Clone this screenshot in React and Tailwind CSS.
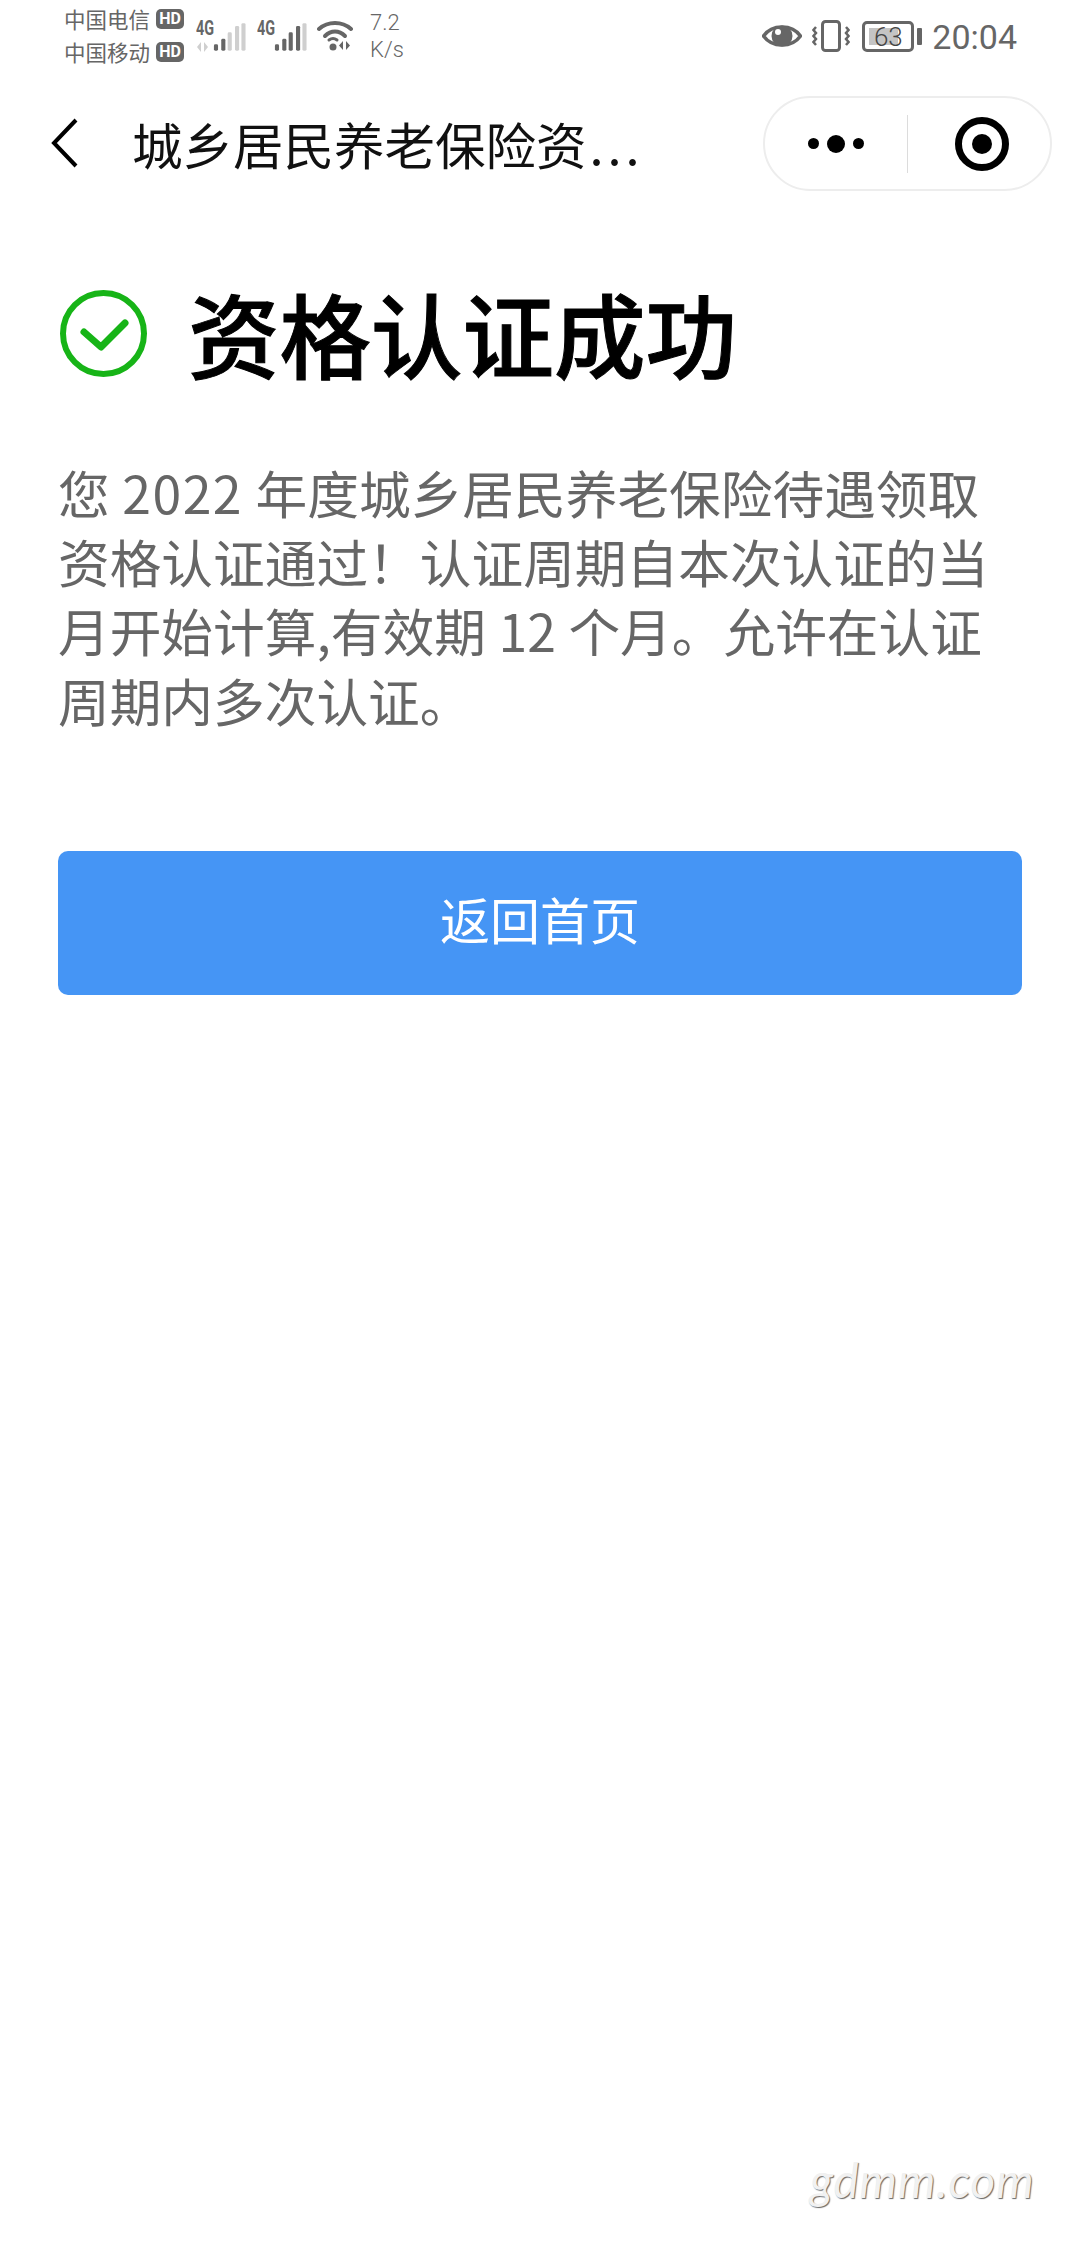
function Bars({ w, active }) {
  const xs = [3, 11, 18, 26, 33];
  const hs = [7, 13, 20, 27, 30];
  return (
    <svg width={w} height="32" viewBox="0 0 36 32" className="block">
      {xs.map((x, i) => (
        <rect key={i} x={x - 2} y={32 - hs[i]} width="4.5" height={hs[i]} rx="1.5" fill={i < active ? "#666" : "#cfcfcf"} />
      ))}
    </svg>
  );
}

function Signal({ active, arrows }) {
  return (
    <div className="relative w-[50px] h-[32px] flex items-end justify-end">
      <span className="absolute left-0 top-[1px] font-['Roboto',sans-serif] font-bold text-[20px] leading-[14px] text-[#666] [transform:scaleX(0.72)] origin-left">4G</span>
      {arrows && (
        <svg width="14" height="10" viewBox="0 0 14 10" className="absolute left-0 bottom-0">
          <path d="M5 0v10L1 5zM8 0v10l4-5z" fill="#cfcfcf" />
        </svg>
      )}
      <Bars w={33} active={active} />
    </div>
  );
}

function HD() {
  return (
    <span className="w-[28px] h-[20px] rounded-[5px] bg-[#666] text-white text-[16px] leading-[20px] font-bold text-center font-['Roboto',sans-serif]">HD</span>
  );
}

export default function App() {
  return (
    <div className="relative w-[1080px] h-[2244px] bg-white overflow-hidden font-['Noto_Sans_CJK_SC','Noto_Sans',sans-serif]">
      {/* status bar */}
      <div className="h-[72px] flex items-start pl-[64px] pr-[63px] text-[#666]">
        <div className="w-[121px] pt-[7px] flex flex-col gap-[9px] text-[21.500px] leading-[24px]">
          <div className="flex items-center gap-[6px]"><span>中国电信</span><HD /></div>
          <div className="flex items-center gap-[6px]"><span>中国移动</span><HD /></div>
        </div>
        <div className="ml-[11px] mt-[20px]"><Signal active={2} arrows /></div>
        <div className="ml-[11px] mt-[20px]"><Signal active={4} /></div>
        <svg width="36" height="32" viewBox="0 0 36 32" className="ml-[10px] mt-[20px]">
          <path d="M2 9C11 1 25 1 34 9" fill="none" stroke="#666" strokeWidth="4" strokeLinecap="round" />
          <path d="M8 16C14 10 22 10 28 16" fill="none" stroke="#666" strokeWidth="4" strokeLinecap="round" />
          <circle cx="16" cy="27" r="3.5" fill="#666" />
          <path d="M12 20q4-3 8 0" fill="none" stroke="#666" strokeWidth="3" strokeLinecap="round" />
          <path d="M26 21v9l-4-4.500zM29 21v9l4-4.500z" fill="#666" />
        </svg>
        <div className="ml-[17px] mt-[11px] flex flex-col gap-[3px] text-[22px] leading-[24px] font-['Roboto',sans-serif] font-light">
          <span>7.2</span>
          <span>K/s</span>
        </div>
        <div className="flex-1" />
        <svg width="40" height="26" viewBox="0 0 40 26" className="mt-[23px]">
          <path d="M1.500 13C10 1 30 1 38.500 13C30 25 10 25 1.500 13Z" fill="none" stroke="#666" strokeWidth="3.500" />
          <circle cx="20" cy="13" r="10.500" fill="#666" />
          <circle cx="16" cy="9" r="3" fill="#fff" />
        </svg>
        <svg width="38" height="32" viewBox="0 0 38 32" className="ml-[10px] mt-[20px]">
          <rect x="10.500" y="1.500" width="17" height="29" rx="3" fill="none" stroke="#666" strokeWidth="3" />
          <path d="M4 7l-2.500 3 2.500 3-2.500 3 2.500 3-2.500 3 2.500 3M34 7l2.500 3-2.500 3 2.500 3-2.500 3 2.500 3-2.500 3" fill="none" stroke="#666" strokeWidth="2.500" />
        </svg>
        <div className="ml-[12px] mt-[21px] flex items-center">
          <div className="relative w-[52px] h-[31px] rounded-[5px] border-[3px] border-[#666] overflow-hidden flex items-center justify-center">
            <div className="absolute left-[4px] top-[4px] bottom-[4px] w-[29px] bg-[#c4c4c4]" />
            <span className="relative text-[26px] leading-[26px] font-['Roboto',sans-serif] font-light text-[#444]">63</span>
          </div>
          <div className="ml-[3px] w-[5px] h-[17px] rounded-[1px] bg-[#666]" />
        </div>
        <span className="ml-[10px] mt-[16px] text-[34px] leading-[42px] font-['Roboto',sans-serif] text-[#666]">20:04</span>
      </div>

      {/* nav bar */}
      <div className="mt-[24px] h-[95px] flex items-center pl-[50px] pr-[28px]">
        <svg width="28" height="50" viewBox="0 0 28 50" className="mt-[-1px]">
          <path d="M26 2L4 25L26 48" fill="none" stroke="#000" strokeWidth="4" />
        </svg>
        <div className="ml-[54px] w-[510px] text-[50.500px] leading-[60px] text-[#111] whitespace-nowrap mb-[1px]">城乡居民养老保险资<span className="tracking-[4px] ml-[3px]">...</span></div>
        <div className="flex-1" />
        <div className="w-[289px] h-[95px] rounded-full border-[2px] border-[#ededed] flex items-center">
          <div className="w-[142px] flex items-center justify-center gap-[8px]">
            <span className="w-[11px] h-[11px] rounded-full bg-black" />
            <span className="w-[18px] h-[18px] rounded-full bg-black" />
            <span className="w-[11px] h-[11px] rounded-full bg-black" />
          </div>
          <div className="w-[1px] h-[58px] bg-[#dcdcdc]" />
          <div className="flex-1 flex items-center justify-center pl-[6px]">
            <svg width="54" height="54" viewBox="0 0 54 54">
              <circle cx="27" cy="27" r="23.500" fill="none" stroke="#000" strokeWidth="7" />
              <circle cx="27" cy="27" r="10" fill="#000" />
            </svg>
          </div>
        </div>
      </div>

      {/* result heading */}
      <div className="mt-[91px] flex items-center pl-[60px]">
        <svg width="87" height="87" viewBox="0 0 87 87" className="mt-[2px]">
          <circle cx="43.500" cy="43.500" r="40.500" fill="none" stroke="#17b417" strokeWidth="6" />
          <path d="M24 42L41 57L65 33" fill="none" stroke="#17b417" strokeWidth="7" strokeLinecap="round" strokeLinejoin="round" />
        </svg>
        <h1 className="ml-[41px] text-[91.500px] leading-[100px] font-medium text-black [-webkit-text-stroke:1px_#000]">资格认证成功</h1>
      </div>

      {/* description */}
      <p className="mt-[75px] ml-[58px] w-[980px] text-[#666] text-[51.700px] leading-[69.200px] [word-spacing:1px] whitespace-nowrap">
        您 <span className="tracking-[1.500px]">2022</span> 年度城乡居民养老保险待遇领取<br />
        资格认证通过！认证周期自本次认证的当<br />
        月开始计算,有效期 12 个月。允许在认证<br />
        周期内多次认证。
      </p>

      {/* button */}
      <div className="mt-[117px] mx-[58px] h-[144px] rounded-[10px] bg-[#4595f5] flex items-center justify-center text-white text-[50px] pb-[8px]">返回首页</div>

      {/* watermark */}
      <div className="absolute left-[810px] top-[2150px] font-['Lato',sans-serif] italic text-[47.500px] leading-[60px] tracking-[1px] text-[#f1f1f1] [text-shadow:1px_1px_1px_#666]">gdmm.com</div>
    </div>
  );
}
